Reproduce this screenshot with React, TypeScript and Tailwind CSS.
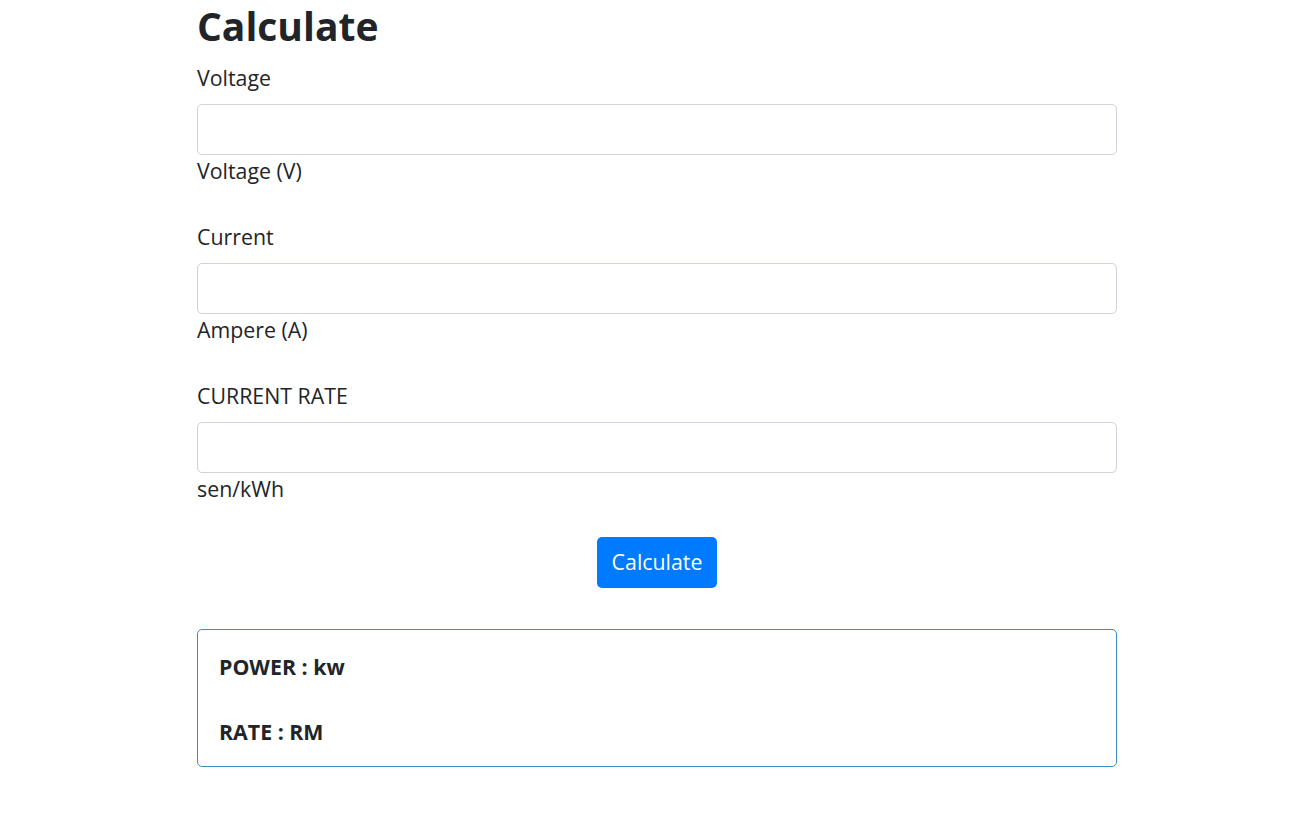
import React from 'react';

const font = { fontFamily: '"Segoe UI", "Open Sans", "Noto Sans", sans-serif' };

const Field: React.FC<{ label: string; help: string }> = ({ label, help }) => (
  <div className="mb-[33.7px]">
    <label className="block text-[21.33px] leading-[32px] mb-[10.67px]">{label}</label>
    <input
      type="text"
      className="block w-full h-[50.67px] rounded-[5px] border border-[#ced4da] bg-white px-4 outline-none"
    />
    <small className="block text-[21.33px] leading-[32px]">{help}</small>
  </div>
);

const App: React.FC = () => {
  return (
    <div className="min-h-screen bg-white text-[#212529]" style={font}>
      <div className="pl-[197px]">
        <div className="w-[920px]">
          <h2 className="text-[39px] font-bold leading-[51px] mb-[10.67px]">Calculate</h2>
          <Field label="Voltage" help="Voltage (V)" />
          <Field label="Current" help="Ampere (A)" />
          <Field label="CURRENT RATE" help="sen/kWh" />
          <div className="flex justify-center -mt-[2px]">
            <button className="h-[51px] px-[15px] rounded-[5px] bg-[#007bff] text-white text-[21.33px] leading-[32px]">
              Calculate
            </button>
          </div>
          <div className="mt-[41px] h-[138px] rounded-[5px] border border-[#3a8fc4] px-[21px] pt-[21px] flex flex-col gap-[33px]">
            <p className="text-[21.33px] leading-[32px] font-bold">POWER : kw</p>
            <p className="text-[21.33px] leading-[32px] font-bold">RATE : RM</p>
          </div>
        </div>
      </div>
    </div>
  );
};

export default App;
